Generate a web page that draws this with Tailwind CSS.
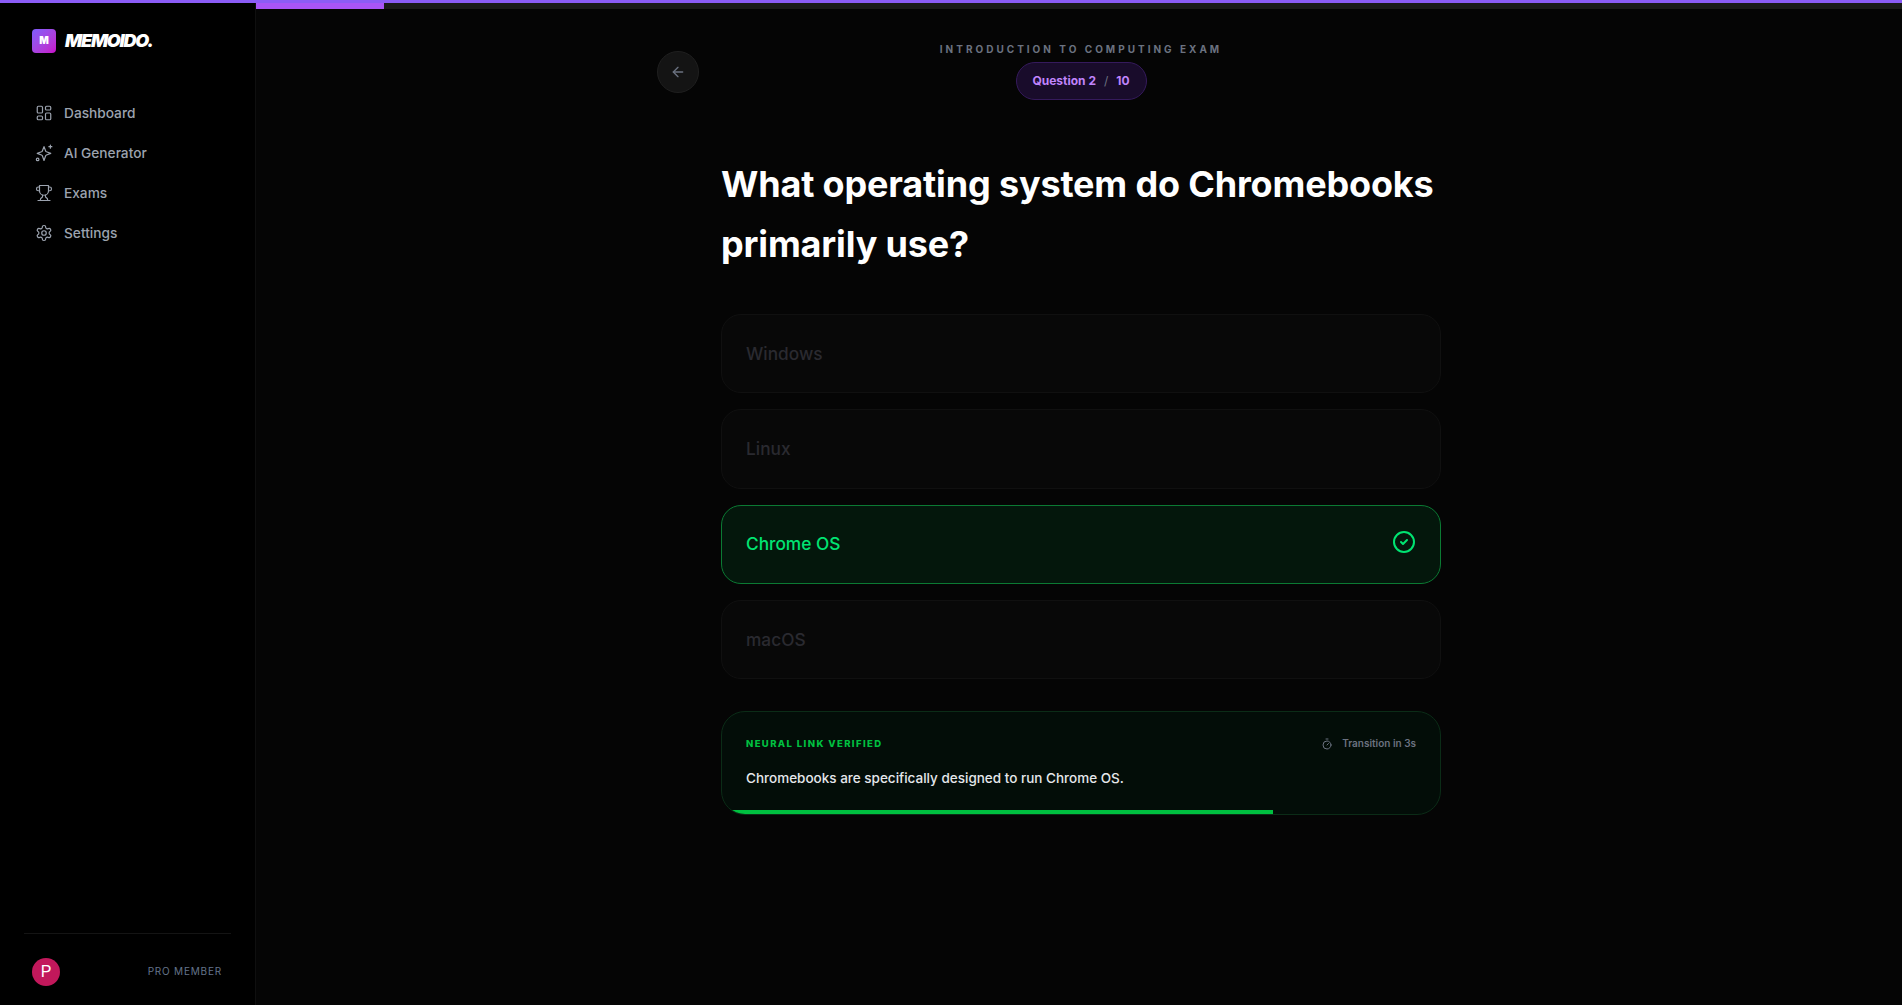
<!DOCTYPE html>
<html lang="en">
<head>
  <meta charset="UTF-8" />
  <title>Memoido</title>
  <script src="https://cdn.jsdelivr.net/npm/@tailwindcss/browser@4"></script>
</head>
<body class="bg-[#050505] font-['Inter',sans-serif] text-white overflow-hidden">
  <div class="h-[3px] bg-[#8b5cf6]"></div>
  <div class="flex h-[1002px]">

    <!-- sidebar -->
    <aside class="w-[256px] shrink-0 bg-black border-r border-[#0f0f0f] flex flex-col px-6">
      <div class="flex items-center gap-[9px] pl-2 pt-[24px]">
        <div class="w-6 h-6 rounded bg-gradient-to-br from-[#7c5cfc] to-[#c800c8] flex items-center justify-center text-[10px] font-black text-white">M</div>
        <span class="text-[18px] font-black italic tracking-[-0.07em] text-white">MEMOIDO.</span>
      </div>
      <nav class="mt-[39px] flex flex-col text-[13.7px] font-medium text-[#9ca3af]">
        <a class="flex items-center gap-[11px] h-10 pl-[11px]">
          <svg class="w-[18px] h-[18px]" viewBox="0 0 24 24" fill="none" stroke="currentColor" stroke-width="1.6"><rect x="3" y="3" width="7" height="9" rx="1.5"/><rect x="14" y="3" width="7" height="5" rx="1.5"/><rect x="14" y="12" width="7" height="9" rx="1.5"/><rect x="3" y="16" width="7" height="5" rx="1.5"/></svg>
          Dashboard
        </a>
        <a class="flex items-center gap-[11px] h-10 pl-[11px]">
          <svg class="w-[18px] h-[18px]" viewBox="0 0 24 24" fill="none" stroke="currentColor" stroke-width="1.6" stroke-linecap="round" stroke-linejoin="round"><path d="M12 3.500l2.200 5.800c.2.500.6.900 1.100 1.100l5.700 2.100-5.700 2.100c-.5.200-.9.600-1.100 1.100l-2.200 6.300-2.200-6.300c-.2-.5-.6-.9-1.100-1.100L3 12.500l5.700-2.100c.5-.2.900-.6 1.100-1.100z"/><path d="M20.500 1.500v4M18.500 3.500h4"/><circle cx="3.500" cy="20.500" r="1.700"/></svg>
          AI Generator
        </a>
        <a class="flex items-center gap-[11px] h-10 pl-[11px]">
          <svg class="w-[18px] h-[18px]" viewBox="0 0 24 24" fill="none" stroke="currentColor" stroke-width="1.6" stroke-linecap="round" stroke-linejoin="round"><path d="M6 9H4.500a2.500 2.500 0 0 1 0-5H6"/><path d="M18 9h1.500a2.500 2.500 0 0 0 0-5H18"/><path d="M4 22h16"/><path d="M10 14.700V17c0 .6-.5 1-1 1.200-1.200.5-2 2-2 3.800"/><path d="M14 14.700V17c0 .6.500 1 1 1.200 1.200.5 2 2 2 3.800"/><path d="M18 2H6v7a6 6 0 0 0 12 0V2Z"/></svg>
          Exams
        </a>
        <a class="flex items-center gap-[11px] h-10 pl-[11px]">
          <svg class="w-[18px] h-[18px]" viewBox="0 0 24 24" fill="none" stroke="currentColor" stroke-width="1.6" stroke-linecap="round" stroke-linejoin="round"><path d="M12.220 2h-.44a2 2 0 0 0-2 2v.18a2 2 0 0 1-1 1.730l-.43.250a2 2 0 0 1-2 0l-.15-.08a2 2 0 0 0-2.730.73l-.22.380a2 2 0 0 0 .73 2.730l.15.100a2 2 0 0 1 1 1.720v.510a2 2 0 0 1-1 1.740l-.15.090a2 2 0 0 0-.73 2.730l.22.380a2 2 0 0 0 2.730.730l.15-.08a2 2 0 0 1 2 0l.43.250a2 2 0 0 1 1 1.730V20a2 2 0 0 0 2 2h.44a2 2 0 0 0 2-2v-.18a2 2 0 0 1 1-1.730l.43-.250a2 2 0 0 1 2 0l.15.080a2 2 0 0 0 2.730-.730l.22-.390a2 2 0 0 0-.73-2.730l-.15-.080a2 2 0 0 1-1-1.740v-.500a2 2 0 0 1 1-1.740l.15-.090a2 2 0 0 0 .73-2.730l-.22-.380a2 2 0 0 0-2.730-.730l-.15.080a2 2 0 0 1-2 0l-.43-.250a2 2 0 0 1-1-1.730V4a2 2 0 0 0-2-2z"/><circle cx="12" cy="12" r="3"/></svg>
          Settings
        </a>
      </nav>
      <div class="mt-auto border-t border-[#141414] h-[72px] flex items-center justify-between pl-2 pr-[9px] pt-1">
        <div class="w-7 h-7 rounded-full bg-[#c2185b] flex items-center justify-center text-[16px] font-['Liberation_Sans',sans-serif] text-white">P</div>
        <span class="text-[10px] tracking-[0.08em] text-[#64748b]">PRO MEMBER</span>
      </div>
    </aside>

    <!-- main -->
    <main class="flex-1 flex flex-col">
      <div class="h-[6px] bg-[#1a1a1a]"><div class="h-full w-[128px] bg-[#a855f7]"></div></div>

      <div class="pl-1">
        <div class="w-[848px] mx-auto pt-[33px] grid grid-cols-[42px_1fr_42px]">
          <div class="pt-[9px]">
            <button class="w-[42px] h-[42px] rounded-full bg-[#141414] border border-[#1f1f1f] flex items-center justify-center text-[#6b7280]">
              <svg class="w-4 h-4" viewBox="0 0 24 24" fill="none" stroke="currentColor" stroke-width="2" stroke-linecap="round" stroke-linejoin="round"><path d="M19 12H5"/><path d="m12 19-7-7 7-7"/></svg>
            </button>
          </div>
          <div class="flex flex-col items-center">
            <p class="text-[10px] leading-[15px] font-bold tracking-[0.3em] text-[#6b7280]">INTRODUCTION TO COMPUTING EXAM</p>
            <div class="mt-[5px] h-[38px] w-[131px] rounded-full bg-[#190c2b] border border-[#351a5c] flex items-center justify-center gap-2 text-[12px] font-bold text-[#c084fc]">
              <span>Question 2</span><span class="text-[#6b7280] font-normal">/</span><span>10</span>
            </div>
          </div>
        </div>

        <div class="w-[720px] mx-auto pt-[54px]">
          <h1 class="text-[36px] leading-[60px] font-bold tracking-[-0.16px] text-white">What operating system do Chromebooks primarily use?</h1>

          <div class="mt-[40px] flex flex-col gap-4">
            <div class="h-[79.33px] rounded-[20px] border border-[#101010] bg-[#080808] flex items-center px-6 text-[17.3px] font-medium text-[#2a2a30]">Windows</div>
            <div class="h-[79.33px] rounded-[20px] border border-[#101010] bg-[#080808] flex items-center px-6 text-[17.3px] font-medium text-[#2a2a30]">Linux</div>
            <div class="h-[79.33px] rounded-[20px] border border-[#0b7a33] bg-[#04170c] flex items-center justify-between px-6 text-[17.3px] font-medium text-[#00e472]">
              Chrome OS
              <svg class="w-[24px] h-[24px] -mt-1" viewBox="0 0 24 24" fill="none" stroke="currentColor" stroke-width="2" stroke-linecap="round" stroke-linejoin="round"><circle cx="12" cy="12" r="10"/><path d="m9 12 2 2 4-4"/></svg>
            </div>
            <div class="h-[79.33px] rounded-[20px] border border-[#101010] bg-[#080808] flex items-center px-6 text-[17.3px] font-medium text-[#2a2a30]">macOS</div>
          </div>

          <div class="relative mt-[32px] h-[104px] rounded-[24px] border border-[#0b2c17] bg-[#030d08] overflow-hidden px-6 pt-6">
            <div class="flex items-center justify-between h-[16px]">
              <span class="text-[9.5px] font-extrabold tracking-[1.4px] text-[#00c040]">NEURAL LINK VERIFIED</span>
              <span class="flex items-center gap-[9px] -mt-px text-[10px] font-semibold text-[#6b7280]">
                <svg class="w-3 h-3" viewBox="0 0 24 24" fill="none" stroke="currentColor" stroke-width="2" stroke-linecap="round" stroke-linejoin="round"><path d="M10 2h4"/><path d="M12 14l3-3"/><circle cx="12" cy="14" r="8"/></svg>
                Transition in 3s
              </span>
            </div>
            <p class="mt-[16px] text-[13.5px] font-medium text-[#e5e7eb]">Chromebooks are specifically designed to run Chrome OS.</p>
            <div class="absolute left-0 bottom-0 h-1 w-[76.7%] bg-[#00c040]"></div>
          </div>
        </div>
      </div>
    </main>
  </div>
</body>
</html>
